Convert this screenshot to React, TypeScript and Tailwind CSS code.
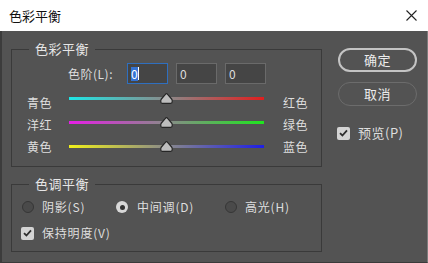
const F = "font-['Noto_Sans_CJK_SC','Noto_Sans',sans-serif]";

function Thumb() {
  return (
    <svg width="13" height="11" viewBox="0 0 13 11" className="absolute left-[91px] top-[1px]">
      <path
        d="M5.6 1.2 Q6.5 0.2 7.4 1.2 L11.6 6 Q12.2 6.7 12.2 7.6 L12.2 8.8 Q12.2 10.3 10.7 10.3 L2.3 10.3 Q0.8 10.3 0.8 8.8 L0.8 7.6 Q0.8 6.7 1.4 6 Z"
        fill="#bdbdbd"
        stroke="#262626"
        strokeWidth="1.2"
      />
    </svg>
  );
}

function Track({ from, to }: { from: string; to: string }) {
  return (
    <div className="relative h-[24px]">
      <div
        className="mt-[5px] h-[3px] w-[195px]"
        style={{ background: `linear-gradient(to right, ${from}, #8a8a8a 50%, ${to})` }}
      />
      <Thumb />
    </div>
  );
}

function Check() {
  return (
    <div className="flex h-[13px] w-[13px] items-center justify-center rounded-[2px] bg-[#d4d4d4]">
      <svg width="9" height="8" viewBox="0 0 9 8">
        <path d="M1 4.2 L3.4 6.5 L8 1.4" fill="none" stroke="#2e2e2e" strokeWidth="1.8" />
      </svg>
    </div>
  );
}

function Radio({ checked }: { checked?: boolean }) {
  return checked ? (
    <div className="flex h-[12px] w-[12px] items-center justify-center rounded-full bg-[#d8d8d8]">
      <div className="h-[5px] w-[5px] rounded-full bg-[#333333]" />
    </div>
  ) : (
    <div className="h-[12px] w-[12px] rounded-full border border-[#363636] bg-[#4a4a4a]" />
  );
}

export default function App() {
  return (
    <div className={`flex h-[263px] w-[428px] flex-col ${F} text-[12px] text-[#dedede]`}>
      <div className="flex h-[31px] shrink-0 items-center justify-between bg-white pl-[9px] pr-[11px] text-[13px] text-[#111111]">
        <span>色彩平衡</span>
        <svg width="11" height="11" viewBox="0 0 11 11">
          <path d="M0.5 0.5 L10.5 10.5 M10.5 0.5 L0.5 10.5" stroke="#222222" strokeWidth="1.1" />
        </svg>
      </div>
      <div className="flex flex-1 border-b border-l-2 border-r border-b-[#3a3a3a] border-l-[#3c3c3c] border-r-[#7c7c7c] bg-[#535353]">
        <div className="ml-[9px] flex w-[311px] flex-col">
          <fieldset className="mt-[9px] h-[127px] border border-[#3a3a3a]">
            <legend className="ml-[17px] px-[6px] text-[13px] leading-[18px] tracking-[0.5px] text-[#e6e6e6]">色彩平衡</legend>
            <div className="mt-[5px] flex h-[21px] items-center">
              <span className="ml-[56px] w-[59px] tracking-[0.5px]">色阶(L):</span>
              <div className="flex gap-[8px]">
                <div className="flex h-[21px] w-[41px] items-center border border-[#2f6fbf] bg-[#454545] pl-[3px]">
                  <span className="bg-[#3573d3] leading-[14px] text-white">0</span>
                  <span className="h-[13px] w-[1px] bg-white" />
                </div>
                <div className="flex h-[21px] w-[41px] items-center border border-[#6a6a6a] bg-[#454545] pl-[3px]">0</div>
                <div className="flex h-[21px] w-[41px] items-center border border-[#6a6a6a] bg-[#454545] pl-[3px]">0</div>
              </div>
            </div>
            <div className="mt-[8px] flex">
              <div className="ml-[15px] flex w-[42px] flex-col leading-[22px] tracking-[0.5px]">
                <span>青色</span>
                <span>洋红</span>
                <span>黄色</span>
              </div>
              <div className="flex w-[195px] flex-col">
                <Track from="#1ee6e6" to="#e01e1e" />
                <Track from="#e61ee6" to="#1ee61e" />
                <Track from="#f0f01a" to="#1e1ee6" />
              </div>
              <div className="ml-[19px] flex flex-col leading-[22px] tracking-[0.5px]">
                <span>红色</span>
                <span>绿色</span>
                <span>蓝色</span>
              </div>
            </div>
          </fieldset>
          <fieldset className="mt-[8px] h-[77px] border border-[#3a3a3a]">
            <legend className="ml-[17px] px-[6px] text-[13px] leading-[18px] tracking-[0.5px] text-[#e6e6e6]">色调平衡</legend>
            <div className="ml-[10px] mt-[2px] flex h-[24px] items-center tracking-[0.8px]">
              <div className="flex w-[94px] items-center gap-[8px]">
                <Radio />
                <span>阴影(S)</span>
              </div>
              <div className="flex w-[109px] items-center gap-[9px]">
                <Radio checked />
                <span>中间调(D)</span>
              </div>
              <div className="flex items-center gap-[8px]">
                <Radio />
                <span>高光(H)</span>
              </div>
            </div>
            <div className="ml-[9px] mt-[2px] flex h-[24px] items-center gap-[8px] tracking-[0.8px]">
              <Check />
              <span>保持明度(V)</span>
            </div>
          </fieldset>
        </div>
        <div className="ml-[16px] flex flex-col">
          <div className="mt-[17px] flex h-[24px] w-[79px] items-center justify-center rounded-full border-2 border-[#c4c4c4] text-[13px] tracking-[0.5px] text-[#ececec]">
            确定
          </div>
          <div className="mt-[10px] flex h-[24px] w-[79px] items-center justify-center rounded-full border-[1.5px] border-[#6c6c6c] text-[13px] tracking-[0.5px] text-[#ececec]">
            取消
          </div>
          <div className="-ml-[1px] mt-[17px] flex h-[20px] items-center gap-[8px]">
            <Check />
            <span className="text-[13px] tracking-[0.5px]">预览(P)</span>
          </div>
        </div>
      </div>
    </div>
  );
}
